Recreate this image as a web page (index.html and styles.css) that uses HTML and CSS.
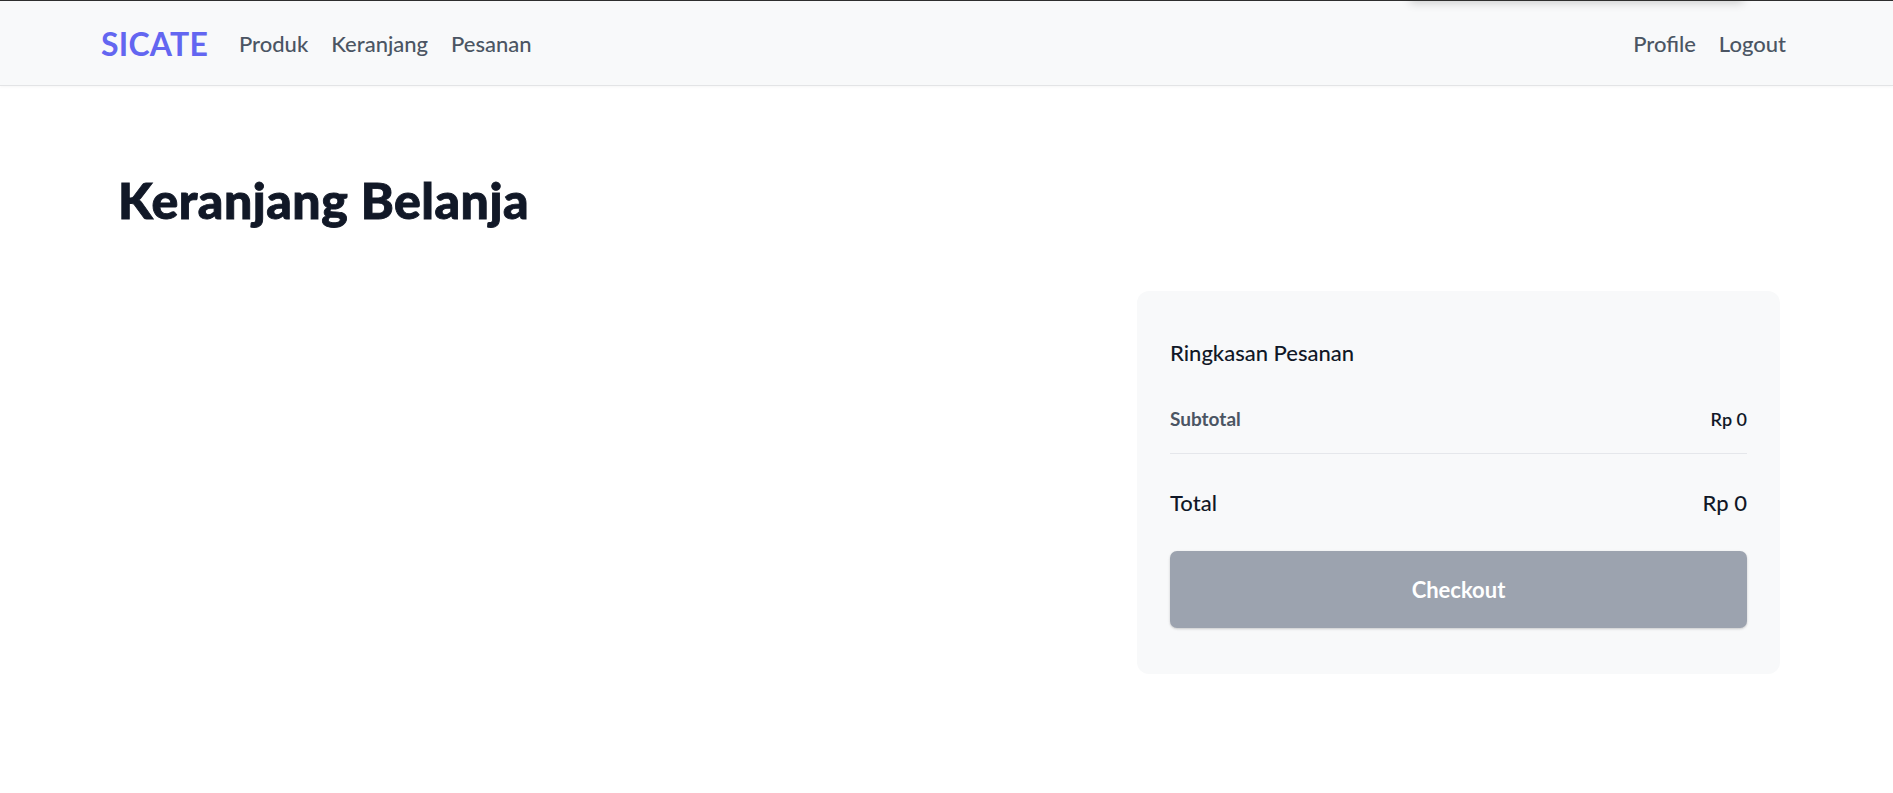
FILE: index.html
```html
<!DOCTYPE html>
<html lang="id">
<head>
<meta charset="utf-8">
<title>Keranjang Belanja - SICATE</title>
<link rel="stylesheet" href="styles.css">
</head>
<body>
<nav class="navbar">
  <div class="nav-shadow"></div>
  <div class="nav-left">
    <a class="brand" href="#">SICATE</a>
    <div class="nav-links">
      <a href="#">Produk</a>
      <a href="#">Keranjang</a>
      <a href="#">Pesanan</a>
    </div>
  </div>
  <div class="nav-links">
    <a href="#">Profile</a>
    <a href="#">Logout</a>
  </div>
</nav>
<main class="main">
  <h1 class="page-title">Keranjang Belanja</h1>
  <div class="cart-grid">
    <div class="cart-items"></div>
    <aside class="summary">
      <h2 class="summary-title">Ringkasan Pesanan</h2>
      <div class="row row-sub">
        <span class="label">Subtotal</span>
        <span class="value">Rp 0</span>
      </div>
      <div class="divider"></div>
      <div class="row row-total">
        <span>Total</span>
        <span>Rp 0</span>
      </div>
      <button class="checkout" disabled>Checkout</button>
    </aside>
  </div>
</main>
</body>
</html>
```

FILE: styles.css
```css
* { box-sizing: border-box; }
html, body { margin: 0; padding: 0; background: #ffffff; }
body {
  font-family: "Lato", "Open Sans", sans-serif;
  color: #111827;
}
a { text-decoration: none; }

.navbar {
  position: relative;
  height: 86px;
  background: #f8f9fa;
  border-top: 1px solid #2e2e2e;
  border-bottom: 1px solid #e3e4e6;
  box-shadow: 0 1px 3px rgba(0,0,0,0.04);
  display: flex;
  align-items: center;
  justify-content: space-between;
  padding: 2px 107px 0 101px;
}
.nav-shadow {
  position: absolute;
  top: -14px;
  left: 1410px;
  width: 333px;
  height: 14px;
  box-shadow: 0 2px 10px rgba(0,0,0,0.18);
  background: transparent;
}
.nav-left { display: flex; align-items: center; gap: 31px; }
.brand {
  font-size: 32px;
  font-weight: 700;
  color: #6366f1;
  line-height: 1;
  letter-spacing: 0.2px;
}
.nav-links { display: flex; align-items: center; gap: 23px; }
.nav-links a {
  font-size: 22px;
  font-weight: 500;
  color: #4b5563;
  line-height: 1;
}

.main { padding: 84px 113px 0 118px; }
.page-title {
  margin: 0;
  font-size: 50px;
  line-height: 60px;
  font-weight: 900;
  letter-spacing: 0.5px;
  -webkit-text-stroke: 0.9px #111827;
  color: #111827;
}
.cart-grid {
  margin-top: 61px;
  display: grid;
  grid-template-columns: 1fr 643px;
}
.summary {
  background: #f8f9fa;
  border-radius: 12px;
  padding: 45px 33px 46px 33px;
  display: flex;
  flex-direction: column;
}
.summary-title {
  margin: 0;
  font-size: 22px;
  line-height: 34px;
  font-weight: 500;
  color: #111827;
}
.row { display: flex; justify-content: space-between; align-items: baseline; }
.row-sub {
  margin-top: 35px;
  font-size: 19px;
  line-height: 27px;
}
.row-sub .label { font-weight: 700; color: #4b5563; }
.row-sub .value { font-weight: 600; color: #111827; font-size: 18px; }
.divider {
  margin-top: 20px;
  height: 1px;
  background: #e5e7eb;
}
.row-total {
  margin-top: 32px;
  font-size: 22px;
  line-height: 33px;
  font-weight: 500;
  color: #111827;
}
.checkout {
  margin-top: 32px;
  height: 77px;
  width: 100%;
  border: none;
  border-radius: 7px;
  background: #9ca3af;
  color: #ffffff;
  font-family: "Lato", "Open Sans", sans-serif;
  font-size: 22px;
  font-weight: 700;
  box-shadow: 0 1px 3px rgba(0,0,0,0.12), 0 1px 2px rgba(0,0,0,0.08);
  cursor: not-allowed;
}
```
